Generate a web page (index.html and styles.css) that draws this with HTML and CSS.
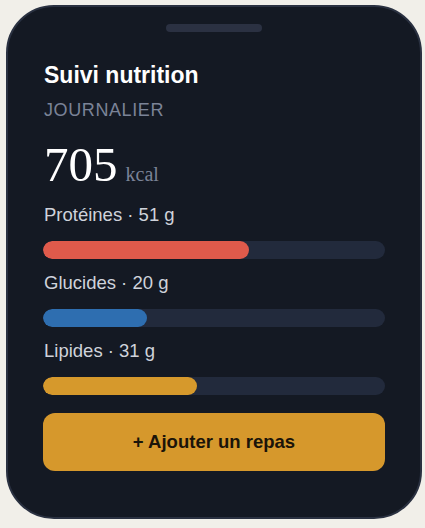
FILE: index.html
```html
<!DOCTYPE html>
<html lang="fr">

<head>
  <meta charset="UTF-8" />
  <meta name="viewport" content="width=device-width, initial-scale=1.0" />
  <title>Suivi nutrition</title>
  <link rel="stylesheet" href="styles.css">
</head>

<body>
  <div class="card">
    <div class="handle"></div>

    <h1 class="title">Suivi nutrition</h1>
    <p class="period">JOURNALIER</p>

    <p class="total"><span class="total-value">705</span><span class="total-unit">kcal</span></p>

    <div class="macros">
      <div class="macro">
        <p class="macro-label">Protéines · 51 g</p>
        <div class="track"><div class="fill fill-protein" style="width: 60.2%"></div></div>
      </div>
      <div class="macro">
        <p class="macro-label">Glucides · 20 g</p>
        <div class="track"><div class="fill fill-carbs" style="width: 30.4%"></div></div>
      </div>
      <div class="macro">
        <p class="macro-label">Lipides · 31 g</p>
        <div class="track"><div class="fill fill-fat" style="width: 45%"></div></div>
      </div>
    </div>

    <button class="add-meal">+ Ajouter un repas</button>
  </div>
</body>

</html>
```

FILE: styles.css
```css
* {
  box-sizing: border-box;
}

body {
  margin: 0;
  padding: 5px 3px 0 6px;
  background-color: #f1efe9;
  font-family: "Liberation Sans", Arial, sans-serif;
}

.card {
  width: 416px;
  height: 514px;
  background-color: #141923;
  border: 2px solid #2a3141;
  border-radius: 48px;
  padding: 17px 35px 0;
  display: flex;
  flex-direction: column;
}

.handle {
  width: 96px;
  height: 8px;
  border-radius: 4px;
  background-color: #2b3142;
  margin: 0 auto 29px;
}

.title {
  margin: 0;
  padding-left: 1px;
  color: #ffffff;
  font-size: 23px;
  line-height: 28px;
  font-weight: bold;
}

.period {
  margin: 10px 0 0;
  padding-left: 1px;
  color: #7b8397;
  font-size: 18px;
  line-height: 22px;
  letter-spacing: 0.6px;
}

.total {
  margin: 20px 0 0;
  padding-left: 1px;
  display: flex;
  align-items: baseline;
  height: 48px;
  color: #ffffff;
  font-family: "Liberation Serif", "Times New Roman", serif;
  line-height: 48px;
}

.total-value {
  font-size: 49px;
}

.total-unit {
  margin-left: 8px;
  font-size: 20px;
  line-height: 20px;
  color: #7b8397;
}

.macros {
  margin-top: 15px;
  display: flex;
  flex-direction: column;
  gap: 13px;
}

.macro-label {
  margin: 0 0 15px;
  padding-left: 1px;
  color: #cfd3db;
  font-size: 18.5px;
  line-height: 22px;
}

.track {
  height: 18px;
  border-radius: 9px;
  background-color: #222a3c;
  overflow: hidden;
}

.fill {
  height: 100%;
  border-radius: 9px;
}

.fill-protein {
  background-color: #e05a4b;
}

.fill-carbs {
  background-color: #2e6eb0;
}

.fill-fat {
  background-color: #d6992c;
}

.add-meal {
  margin-top: 18px;
  height: 58px;
  width: 100%;
  border: 0;
  border-radius: 12px;
  background-color: #d6982c;
  color: #1b1409;
  font-family: "Liberation Sans", Arial, sans-serif;
  font-size: 18.5px;
  font-weight: bold;
  cursor: pointer;
}
```
